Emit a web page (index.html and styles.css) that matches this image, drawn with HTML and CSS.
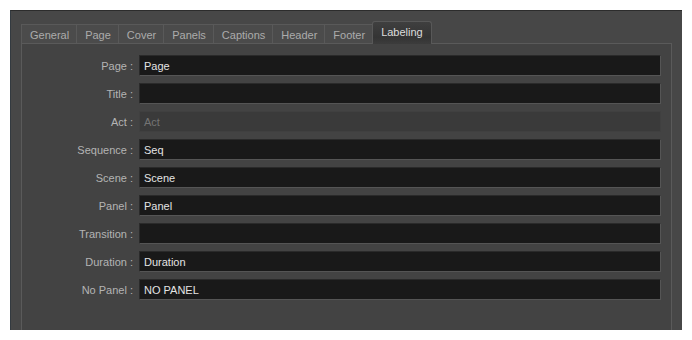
FILE: index.html
```html
<!DOCTYPE html>
<html lang="en">
<head>
  <meta charset="UTF-8">
  <title>Labeling</title>
  <link rel="stylesheet" href="styles.css">
</head>
<body>
  <div class="panel">
    <div class="tabs">
      <div class="tab">General</div>
      <div class="tab">Page</div>
      <div class="tab">Cover</div>
      <div class="tab">Panels</div>
      <div class="tab">Captions</div>
      <div class="tab">Header</div>
      <div class="tab">Footer</div>
      <div class="tab active">Labeling</div>
    </div>
    <div class="pane">
      <label>Page :</label><div class="field">Page</div>
      <label>Title :</label><div class="field"></div>
      <label>Act :</label><div class="field disabled">Act</div>
      <label>Sequence :</label><div class="field">Seq</div>
      <label>Scene :</label><div class="field">Scene</div>
      <label>Panel :</label><div class="field">Panel</div>
      <label>Transition :</label><div class="field"></div>
      <label>Duration :</label><div class="field">Duration</div>
      <label>No Panel :</label><div class="field">NO PANEL</div>
    </div>
  </div>
</body>
</html>
```
FILE: styles.css
```css
* {
  margin: 0;
  padding: 0;
  box-sizing: border-box;
}
body {
  background: #fff;
  font-family: 'Liberation Sans', Arial, sans-serif;
  font-size: 11px;
}
.panel {
  margin: 10px 0 0 10px;
  width: 672px;
  height: 320px;
  background: #474747;
  border-top: 1px solid #2c2c2c;
  border-left: 1px solid #333a40;
  padding: 10px 10px 0 10px;
  overflow: hidden;
}
.tabs {
  display: flex;
  align-items: flex-end;
  height: 22px;
}
.tab {
  height: 19px;
  padding: 0 7px 0 8px;
  line-height: 20px;
  color: #acacac;
  background: #4b4b4b;
  border: 1px solid #595959;
  border-bottom: none;
  border-right: none;
}
.tab.active {
  height: 23px;
  margin-bottom: -1px;
  padding: 0 8px;
  color: #dcdcdc;
  line-height: 21px;
  background: linear-gradient(#3f3f3f, #343434 70%, #3c3c3c);
  border: 1px solid #585858;
  border-bottom: none;
  border-radius: 3px 3px 0 0;
}
.pane {
  width: 651px;
  height: 300px;
  background: #434343;
  border: 1px solid #5a5a5a;
  padding: 11px 10px 0 0;
  display: grid;
  grid-template-columns: 111px 1fr;
  column-gap: 6px;
  row-gap: 7px;
  align-content: start;
  align-items: center;
}
label {
  text-align: right;
  color: #b4b4b4;
}
.field {
  height: 21px;
  line-height: 21px;
  padding-left: 4px;
  color: #e4e4e4;
  background: #191919;
  border: 1px solid #2a2a2a;
  border-right-color: #555;
  border-bottom-color: #555;
}
.field.disabled {
  background: #3a3a3a;
  color: #747474;
  border-color: #404040;
}
```
